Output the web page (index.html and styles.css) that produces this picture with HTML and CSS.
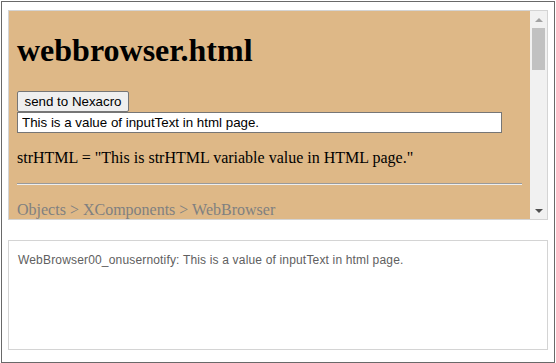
FILE: index.html
```html
<!DOCTYPE html>
<html>
<head>
<meta charset="utf-8">
<link rel="stylesheet" href="styles.css">
</head>
<body>
<div class="frame">
  <div class="browser">
    <div class="viewport">
      <div class="page">
        <h1 class="title">webbrowser.html</h1>
        <button class="send">send to Nexacro</button>
        <input class="input-text" type="text" value="This is a value of inputText in html page.">
        <p class="str">strHTML = "This is strHTML variable value in HTML page."</p>
        <hr class="rule">
        <p class="path">Objects &gt; XComponents &gt; WebBrowser</p>
      </div>
    </div>
    <div class="scrollbar">
      <div class="arrow up"></div>
      <div class="track"><div class="thumb"></div></div>
      <div class="arrow down"></div>
    </div>
  </div>
  <div class="log">WebBrowser00_onusernotify: This is a value of inputText in html page.</div>
</div>
</body>
</html>
```
FILE: styles.css
```css
html, body {
  margin: 0;
  padding: 0;
  background: #ffffff;
}

.frame {
  box-sizing: border-box;
  margin: 1px 0 0 1px;
  width: 554px;
  height: 362px;
  border: 1px solid #696969;
  padding: 8px 6px 0 6px;
}

.browser {
  box-sizing: border-box;
  width: 540px;
  height: 210px;
  border: 1px solid #d4d4d4;
  display: flex;
}

.viewport {
  flex: 1;
  background: #deb887;
  overflow: hidden;
}

.page {
  padding: 0 8px;
  font-family: "Liberation Serif", "Times New Roman", serif;
  font-size: 16px;
  color: #000;
}

.title {
  margin: 21px 0 22px 0;
  font-size: 32px;
  line-height: 37px;
  font-weight: bold;
}

.send {
  display: block;
  box-sizing: border-box;
  width: 112px;
  height: 21px;
  margin: 0;
  padding: 0 6px;
  border: 1px solid #767676;
  border-radius: 2px;
  background: #efefef;
  font-family: "Liberation Sans", Arial, sans-serif;
  font-size: 13.333px;
  color: #000;
}

.input-text {
  display: block;
  box-sizing: border-box;
  width: 485px;
  height: 21px;
  margin: 0;
  padding: 0 4px;
  border: 1px solid #767676;
  background: #fff;
  font-family: "Liberation Sans", Arial, sans-serif;
  font-size: 13.333px;
  color: #000;
}

.str {
  margin: 16px 0;
  line-height: 18px;
}

.rule {
  margin: 0;
  height: 0;
  border: 0;
  border-top: 1px solid #9a9a9a;
  border-bottom: 1px solid #eeeeee;
}

.path {
  margin: 16px 0;
  line-height: 18px;
  color: #808080;
}

.scrollbar {
  width: 17px;
  background: #f1f1f1;
  display: flex;
  flex-direction: column;
}

.arrow {
  height: 17px;
  display: flex;
  align-items: center;
  justify-content: center;
}

.arrow::before {
  content: "";
  width: 0;
  height: 0;
  border-left: 4px solid transparent;
  border-right: 4px solid transparent;
}

.arrow.up::before {
  border-bottom: 4px solid #a3a3a3;
}

.arrow.down::before {
  border-top: 4px solid #505050;
}

.track {
  flex: 1;
  padding: 0 2px;
}

.thumb {
  height: 42px;
  background: #c1c1c1;
}

.log {
  box-sizing: border-box;
  margin-top: 20px;
  width: 540px;
  height: 110px;
  border: 1px solid #d4d4d4;
  padding: 12px 9px 0 9px;
  font-family: "Liberation Sans", Arial, sans-serif;
  font-size: 12px;
  letter-spacing: 0.17px;
  line-height: 14px;
  color: #606060;
}
```
